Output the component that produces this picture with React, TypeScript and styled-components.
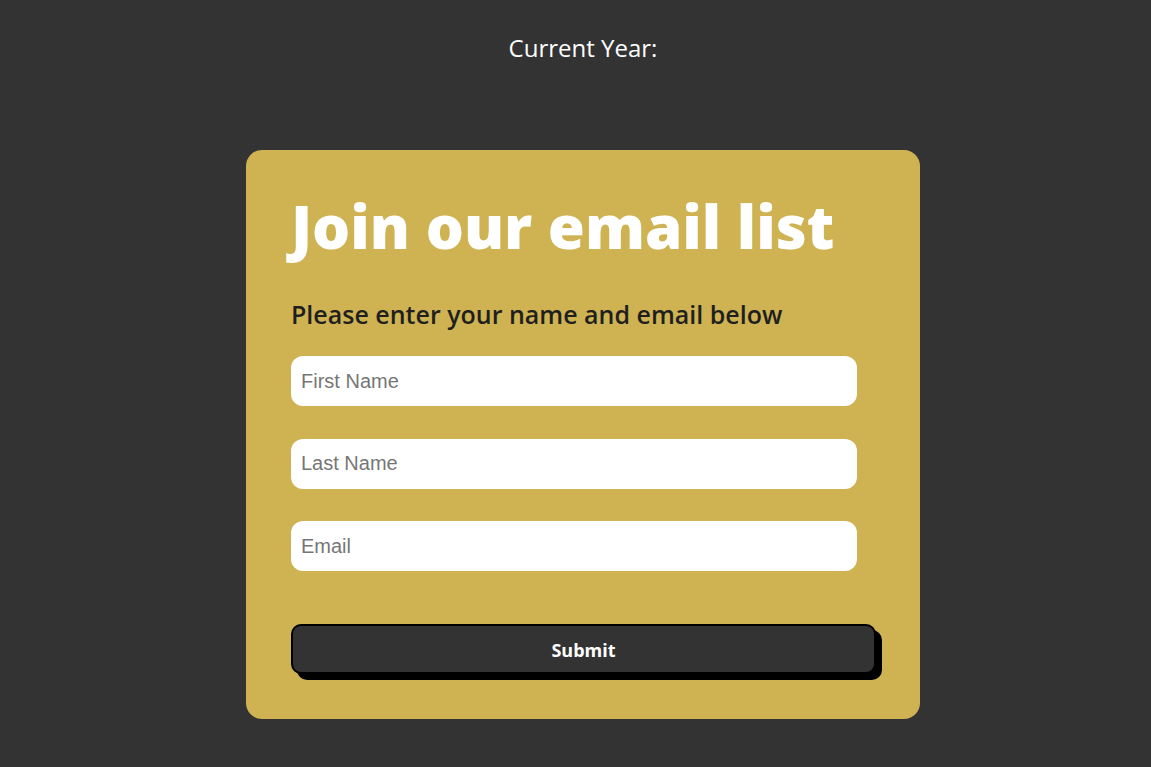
import * as React from "react";
import styled, { createGlobalStyle } from "styled-components";

const GlobalStyle = createGlobalStyle`
  * {
    box-sizing: border-box;
  }

  body {
    margin: 0;
    background: #333333;
    font-family: "Open Sans", "Noto Sans", sans-serif;
  }
`;

export default function App() {
  return (
    <>
      <GlobalStyle />
      <Page>
        <YearLine>Current Year:</YearLine>
        <Card>
          <Title>Join our email list</Title>
          <Subtitle>Please enter your name and email below</Subtitle>
          <Form onSubmit={(e) => e.preventDefault()}>
            <Field type="text" placeholder="First Name" />
            <Field type="text" placeholder="Last Name" />
            <Field type="email" placeholder="Email" />
            <SubmitButton type="submit">Submit</SubmitButton>
          </Form>
        </Card>
      </Page>
    </>
  );
}

const Page = styled.div`
  display: flex;
  flex-direction: column;
  align-items: center;
  padding: 33px 0 48px 15px;
  min-height: 100vh;
`;

const YearLine = styled.p`
  margin: 0;
  font-size: 24px;
  line-height: 30px;
  color: #ffffff;
  text-align: center;
`;

const Card = styled.section`
  width: 674px;
  margin-top: 87px;
  padding: 40px 45px 45px;
  background: #cfb353;
  border-radius: 16px;
`;

const Title = styled.h1`
  margin: 0;
  font-size: 60px;
  line-height: 72px;
  font-weight: 800;
  color: #ffffff;
`;

const Subtitle = styled.p`
  margin: 36px 0 0;
  font-size: 25px;
  line-height: 32px;
  font-weight: 600;
  color: #1f1f1f;
`;

const Form = styled.form`
  display: flex;
  flex-direction: column;
  align-items: flex-start;
  margin-top: 26px;
`;

const Field = styled.input`
  width: 566px;
  height: 50px;
  margin-bottom: 32.5px;
  padding: 0 10px;
  border: none;
  border-radius: 12px;
  background: #ffffff;
  font-family: "Liberation Sans", Arial, sans-serif;
  font-size: 20px;
  color: #333333;
  outline: none;

  &::placeholder {
    color: #767676;
  }

  &:last-of-type {
    margin-bottom: 53px;
  }
`;

const SubmitButton = styled.button`
  width: 585px;
  height: 50px;
  padding-top: 3px;
  border: 2px solid #000000;
  border-radius: 10px;
  background: #333333;
  box-shadow: 6px 6px 0 #000000;
  font-family: "Open Sans", "Noto Sans", sans-serif;
  font-size: 18px;
  font-weight: 700;
  color: #ffffff;
  cursor: pointer;
`;
